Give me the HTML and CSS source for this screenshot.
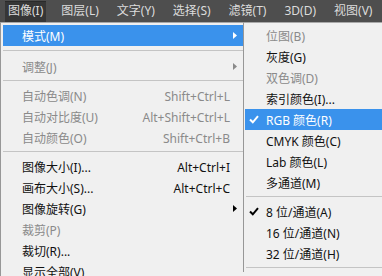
FILE: index.html
```html
<!DOCTYPE html>
<html lang="zh-CN">
<head>
  <meta charset="UTF-8" />
  <title>图像菜单</title>
  <link rel="stylesheet" href="styles.css">
</head>
<body>

<div class="menubar">
  <span class="bar-item active">图像(I)</span>
  <span class="bar-item">图层(L)</span>
  <span class="bar-item">文字(Y)</span>
  <span class="bar-item">选择(S)</span>
  <span class="bar-item">滤镜(T)</span>
  <span class="bar-item">3D(D)</span>
  <span class="bar-item">视图(V)</span>
</div>

<div class="menus">
  <div class="menu main">
    <div class="item sel">
      <span class="label">模式(M)</span>
      <svg class="arrow" width="4" height="7" viewBox="0 0 4 7"><polygon points="0,0 4,3.5 0,7"/></svg>
    </div>
    <div class="sep first"></div>
    <div class="item off">
      <span class="label">调整(J)</span>
      <svg class="arrow" width="4" height="7" viewBox="0 0 4 7"><polygon points="0,0 4,3.5 0,7"/></svg>
    </div>
    <div class="sep"></div>
    <div class="item off"><span class="label">自动色调(N)</span><span class="key">Shift+Ctrl+L</span></div>
    <div class="item off"><span class="label">自动对比度(U)</span><span class="key">Alt+Shift+Ctrl+L</span></div>
    <div class="item off"><span class="label">自动颜色(O)</span><span class="key">Shift+Ctrl+B</span></div>
    <div class="sep"></div>
    <div class="item"><span class="label">图像大小(I)...</span><span class="key">Alt+Ctrl+I</span></div>
    <div class="item"><span class="label">画布大小(S)...</span><span class="key">Alt+Ctrl+C</span></div>
    <div class="item">
      <span class="label">图像旋转(G)</span>
      <svg class="arrow" width="4" height="7" viewBox="0 0 4 7"><polygon points="0,0 4,3.5 0,7"/></svg>
    </div>
    <div class="item off"><span class="label">裁剪(P)</span></div>
    <div class="item"><span class="label">裁切(R)...</span></div>
    <div class="item"><span class="label">显示全部(V)</span></div>
  </div>

  <div class="menu sub">
    <div class="item off"><span class="mark"></span><span class="label">位图(B)</span></div>
    <div class="item"><span class="mark"></span><span class="label">灰度(G)</span></div>
    <div class="item off"><span class="mark"></span><span class="label">双色调(D)</span></div>
    <div class="item"><span class="mark"></span><span class="label">索引颜色(I)...</span></div>
    <div class="item sel">
      <span class="mark"><svg width="10" height="9" viewBox="0 0 10 9"><path d="M1 4.5 L3.8 7.3 L9 1.2"/></svg></span>
      <span class="label">RGB 颜色(R)</span>
    </div>
    <div class="item"><span class="mark"></span><span class="label">CMYK 颜色(C)</span></div>
    <div class="item"><span class="mark"></span><span class="label">Lab 颜色(L)</span></div>
    <div class="item"><span class="mark"></span><span class="label">多通道(M)</span></div>
    <div class="sep"></div>
    <div class="item">
      <span class="mark"><svg width="10" height="9" viewBox="0 0 10 9"><path d="M1 4.5 L3.8 7.3 L9 1.2"/></svg></span>
      <span class="label">8 位/通道(A)</span>
    </div>
    <div class="item"><span class="mark"></span><span class="label">16 位/通道(N)</span></div>
    <div class="item"><span class="mark"></span><span class="label">32 位/通道(H)</span></div>
    <div class="sep"></div>
  </div>
</div>

</body>
</html>
```

FILE: styles.css
```css
body {
  margin: 0;
  width: 382px;
  height: 276px;
  overflow: hidden;
  background: #f0f0f0;
  font-family: "Noto Sans", "Noto Sans CJK SC", sans-serif;
  font-size: 12px;
  color: #111;
}
.menubar {
  height: 22px;
  background: #4e4e4e;
  display: flex;
  align-items: flex-end;
  padding-left: 5px;
  white-space: nowrap;
}
.bar-item {
  height: 21px;
  line-height: 20px;
  padding: 0 3px;
  margin-right: 12px;
  font-size: 12px;
  color: #dcdcdc;
}
.bar-item.active {
  background: #363636;
  box-shadow: inset 0 1px 0 #2a2a2a;
}
.menus {
  display: flex;
  align-items: flex-start;
}
.menu {
  background: #f0f0f0;
  border-top: 1px solid #a9a9a9;
  padding-top: 2px;
}
.main {
  width: 240px;
  border-left: 1px solid #979797;
  padding-left: 2px;
  flex: none;
}
.sub {
  flex: 1;
  border-left: 1px solid #979797;
  padding-left: 1px;
}
.item {
  display: flex;
  align-items: center;
  height: 21px;
  line-height: 21px;
  white-space: nowrap;
}
.main .item {
  padding: 0 6px 0 19px;
}
.sub .item {
  padding-left: 4px;
}
.label {
  flex: 1;
  padding-top: 2px;
}
.key {
  margin-right: 7px;
  padding-top: 2px;
}
.off {
  color: #8a8a8a;
}
.sel {
  background: #3a92ec;
  color: #fff;
}
.arrow {
  fill: #000;
}
.off .arrow {
  fill: #8a8a8a;
}
.sel .arrow {
  fill: #fff;
}
.mark {
  width: 17px;
  height: 21px;
  display: flex;
  align-items: center;
}
.mark svg {
  fill: none;
  stroke: #000;
  stroke-width: 2;
}
.sel .mark svg {
  stroke: #fff;
}
.sep {
  height: 1px;
  margin: 3px 0 4px;
  background: #c4c4c4;
}
.sep.first {
  margin: 4px 0 5px;
}
.sub .sep {
  margin-left: 1px;
}
```
